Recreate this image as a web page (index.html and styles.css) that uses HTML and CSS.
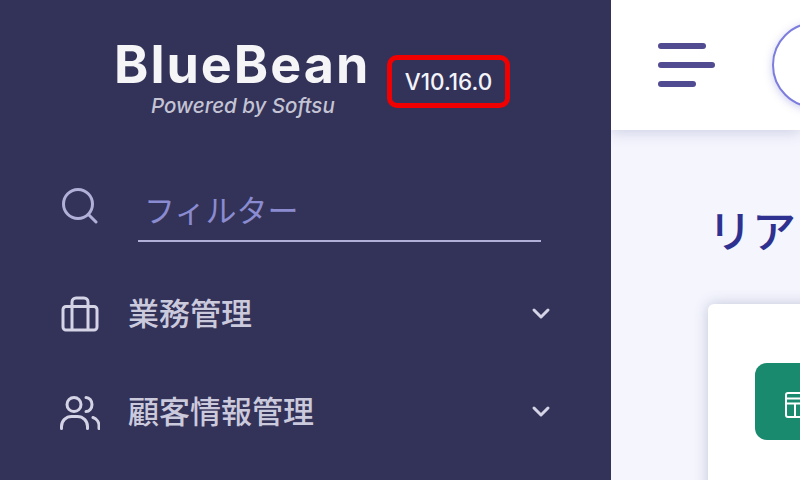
FILE: index.html
```html
<!DOCTYPE html>
<html lang="ja">
<head>
<meta charset="utf-8">
<title>BlueBean</title>
<link rel="stylesheet" href="styles.css">
</head>
<body>
<div class="app">
  <aside class="sidebar">
    <header class="brand">
      <div class="logo">
        <div class="logo-name">BlueBean</div>
        <div class="logo-sub">Powered by Softsu</div>
      </div>
      <div class="version">V10.16.0</div>
    </header>
    <div class="filter">
      <svg class="filter-icon" viewBox="0 0 38 38" fill="none" stroke="#b1b0d8" stroke-width="3" stroke-linecap="round"><circle cx="18" cy="18" r="14.500"/><path d="M28.500 28.500L36 36"/></svg>
      <div class="filter-field">フィルター</div>
    </div>
    <nav class="menu">
      <div class="menu-item">
        <svg class="menu-icon" viewBox="0 0 40 36" fill="none" stroke="#d5d4e6" stroke-width="3" stroke-linejoin="round"><rect x="3" y="10.500" width="34" height="23.500" rx="3"/><path d="M12 34V6a4 4 0 0 1 4-4h8a4 4 0 0 1 4 4v28"/></svg>
        <span class="menu-label">業務管理</span>
        <svg class="chevron" viewBox="0 0 20 14" fill="none" stroke="#d5d4e6" stroke-width="3" stroke-linecap="round" stroke-linejoin="round"><path d="M3 3l7 7 7-7"/></svg>
      </div>
      <div class="menu-item">
        <svg class="menu-icon" viewBox="0 0 40 36" fill="none" stroke="#d5d4e6" stroke-width="3" stroke-linecap="round"><circle cx="14" cy="10.500" r="7"/><path d="M1.500 34.500v-2a10 10 0 0 1 10-10h6a10 10 0 0 1 10 10v2"/><path d="M26 3.500a6 7 0 0 1 0 14"/><path d="M33 23.500a8 9 0 0 1 6 9v2"/></svg>
        <span class="menu-label">顧客情報管理</span>
        <svg class="chevron" viewBox="0 0 20 14" fill="none" stroke="#d5d4e6" stroke-width="3" stroke-linecap="round" stroke-linejoin="round"><path d="M3 3l7 7 7-7"/></svg>
      </div>
    </nav>
  </aside>
  <main class="main">
    <div class="topbar">
      <div class="hamburger">
        <span class="bar bar-a"></span>
        <span class="bar bar-b"></span>
        <span class="bar bar-c"></span>
      </div>
      <div class="avatar"></div>
    </div>
    <div class="content">
      <h1 class="title">リア</h1>
      <section class="card">
        <div class="tile">
          <svg class="tile-icon" viewBox="0 0 26 26" fill="none" stroke="#fff" stroke-width="2"><rect x="1" y="1" width="24" height="24" rx="2"/><path d="M1 6.500h24M1 11.500h24M10 11.500V25"/></svg>
        </div>
      </section>
    </div>
  </main>
</div>
</body>
</html>
```
FILE: styles.css
```css
* { box-sizing: border-box; }
html, body { margin: 0; width: 800px; height: 480px; overflow: hidden; }
body { font-family: "Inter", "Noto Sans CJK JP", sans-serif; background: #f4f5fd; }
.app { display: flex; width: 800px; height: 480px; overflow: hidden; }

.sidebar { flex: 0 0 611px; background: #333258; padding: 40px 60px 0; position: relative; z-index: 2; }
.brand { display: flex; align-items: flex-start; gap: 18px; padding-left: 54px; margin-bottom: 69px; }
.logo { width: 255px; flex: none; }
.logo-name { font-size: 52px; line-height: 50px; font-weight: 700; color: #f5f5f8; letter-spacing: 2px; white-space: nowrap; }
.logo-sub { font-size: 20.500px; line-height: 22px; font-style: italic; font-weight: 500; color: #c4c4d4; padding-left: 37px; margin-top: 5px; white-space: nowrap; }
.version { flex: none; width: 123px; height: 53px; margin-top: 15px; border: 5px solid #f00000; border-radius: 10px; color: #f2f4fa; font-size: 22.500px; font-weight: 500; display: flex; align-items: center; justify-content: center; }

.filter { display: flex; align-items: flex-start; gap: 40px; margin-bottom: 48px; }
.filter-icon { width: 38px; height: 38px; flex: none; }
.filter-field { width: 403px; height: 56px; border-bottom: 2px solid #b1b0d8; padding: 5px 0 0 6px; color: #8a8bd0; font-size: 31px; line-height: 40px; font-weight: 400; }

.menu { display: flex; flex-direction: column; gap: 50px; }
.menu-item { display: flex; align-items: center; height: 48px; color: #cbcadd; }
.menu-icon { width: 40px; height: 36px; flex: none; }
.menu-label { font-size: 31px; line-height: 48px; margin-left: 28px; flex: 1; font-weight: 500; white-space: nowrap; }
.chevron { width: 20px; height: 14px; flex: none; }

.main { flex: 1; display: flex; flex-direction: column; min-width: 0; }
.topbar { height: 130px; flex: none; background: #fff; box-shadow: 0 2px 14px rgba(70,70,130,0.22); display: flex; align-items: center; padding-left: 47px; gap: 57px; position: relative; z-index: 1; }
.hamburger { display: flex; flex-direction: column; gap: 13px; flex: none; }
.bar { display: block; height: 6px; border-radius: 3px; background: #514b92; }
.bar-a { width: 48px; }
.bar-b { width: 57px; }
.bar-c { width: 38px; }
.avatar { width: 86px; height: 86px; flex: none; border-radius: 50%; border: 2px solid #7d7ddd; background: #fff; box-shadow: 0 2px 8px rgba(110,110,210,0.35); }

.content { flex: 1; padding: 76px 0 0 97px; min-height: 0; overflow: hidden; }
.title { margin: 0; font-size: 44px; line-height: 52px; font-weight: 500; color: #2f3190; white-space: nowrap; height: 52px; }
.card { margin: 46px 0 0 0; width: 400px; height: 300px; background: #fff; border-radius: 6px; box-shadow: 0 0 14px rgba(80,90,140,0.3); padding: 59px 47px 0; }
.tile { width: 120px; height: 77px; border-radius: 12px; background: #1a8a6e; display: flex; align-items: center; padding: 7px 0 0 30px; }
.tile-icon { width: 26px; height: 26px; flex: none; }
```
